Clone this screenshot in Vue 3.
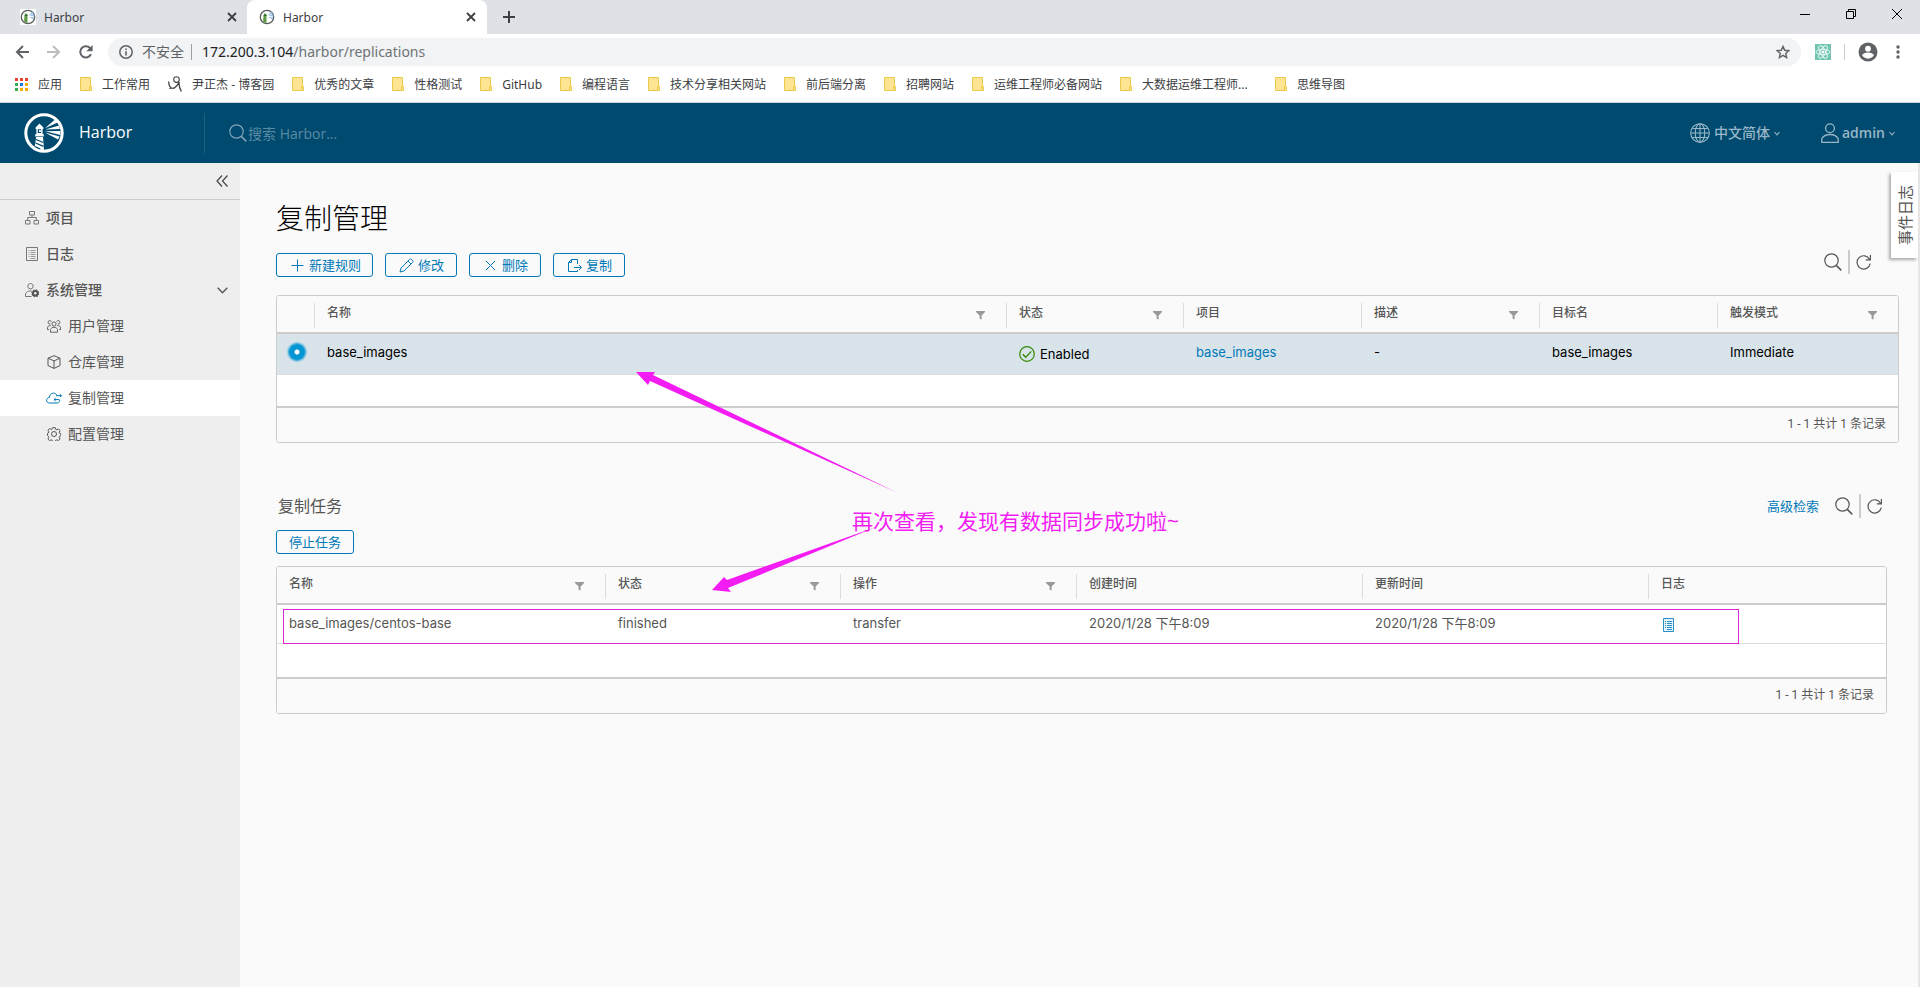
<script setup>
import { h, ref } from 'vue'

const icons = {
  logo: '<circle cx="20" cy="20" r="18.2" fill="none" stroke="#fff" stroke-width="3"/><path fill="#fff" d="M11.6 14.6 15.5 10.6 19.4 14.6V16H18.6V21H19.6V23H11.4V21H12.4V16H11.6z"/><path fill="#004a70" d="M13.8 16.2h3.4v3.8h-3.4z"/><path fill="#fff" d="M15 17.2h2.2v1.8H15z"/><path fill="#fff" d="M12.2 24h6.8l1 13.2-9.4-2.4z"/><path stroke="#004a70" stroke-width="1.3" d="m12 26.5 7.2 3M11.6 30l7.8 3.4M11.2 33.6l5 2.4"/><path fill="#fff" d="m21 15.2 10-8.6 2.6 3zM21.2 16.6l14-4.2.6 3.6zM21.2 18.2l15.2-.2v4zM21 19.6l14.6 3.8-1.6 3.2z"/><path fill="none" stroke="#fff" stroke-width=".8" d="M10.8 23h9.2"/>',
  favicon: '<circle cx="8" cy="8" r="6.700" fill="#fff" stroke="#5a5f5c" stroke-width="1.300"/><path fill="#5f9b45" d="m5.500 4 2 1.600v8.600l-3.400-1.600.4-6z"/><path fill="#2f6b36" d="M4.800 5.800h2.800v1.200H4.800z"/><path fill="#8fb5dd" d="m8.800 6.200 3.800-3.800 1.400 2zM9 7l5.600-1.800v2zM9 8l5.400.6-.6 2z"/>',
  close: '<path fill="none" stroke="#3c4043" stroke-width="1.8" d="m2 2 8 8m0-8-8 8"/>',
  plus: '<path fill="none" stroke="#3c4043" stroke-width="2" d="M6 0v12M0 6h12"/>',
  min: '<path stroke="#000" d="M0 5.5h10"/>',
  restore: '<path fill="none" stroke="#000" d="M.5 2.5h7v7h-7zM2.5 2.5v-2h7v7h-2"/>',
  winclose: '<path fill="none" stroke="#000" d="m0 0 10 10M10 0 0 10"/>',
  back: '<path fill="none" stroke="#5f6368" stroke-width="2" d="M14 7H2m6-6L2 7l6 6"/>',
  forward: '<path fill="none" stroke="#babcbe" stroke-width="2" d="M0 7h12M6 1l6 6-6 6"/>',
  reload: '<path fill="none" stroke="#5f6368" stroke-width="2" d="M12 9.2A5.6 5.6 0 1 1 11.4 3.6"/><path fill="#5f6368" d="M13.6 0v6.2H7.4z"/>',
  info: '<circle cx="7" cy="7" r="6.2" fill="none" stroke="#5f6368" stroke-width="1.5"/><path stroke="#5f6368" stroke-width="1.6" d="M7 6.2v4.2M7 3.4v1.7"/>',
  star: '<path fill="none" stroke="#5f6368" stroke-width="1.4" d="m7 1.4 1.7 3.9 4.1.4-3.1 2.8.9 4.1L7 10.4l-3.6 2.2.9-4.1L1.2 5.7l4.1-.4z"/>',
  react: '<path fill="#71c5b2" d="M0 0h16v16H0z"/><g fill="none" stroke="#e4f6f1" stroke-width="1"><ellipse cx="8" cy="8" rx="7" ry="2.7"/><ellipse cx="8" cy="8" rx="7" ry="2.7" transform="rotate(60 8 8)"/><ellipse cx="8" cy="8" rx="7" ry="2.7" transform="rotate(120 8 8)"/></g><circle cx="8" cy="8" r="1.5" fill="#fff"/>',
  avatar: '<circle cx="10" cy="10" r="9.5" fill="#5f6368"/><circle cx="10" cy="6.7" r="2.9" fill="#fff"/><path fill="#fff" d="M4.2 13.6c0-2.2 3.6-3.2 5.8-3.2s5.8 1 5.8 3.2a7 7 0 0 1-11.6 0z"/>',
  dots: '<g fill="#5f6368"><circle cx="2" cy="2" r="1.7"/><circle cx="2" cy="7" r="1.7"/><circle cx="2" cy="12" r="1.7"/></g>',
  apps: '<path fill="#ea4335" d="M0 0h3v3H0zM5 0h3v3H5zM10 0h3v3h-3z"/><path fill="#34a853" d="M0 5h3v3H0zM0 10h3v3H0z"/><path fill="#1a73e8" d="M5 5h3v3H5z"/><path fill="#f9ab00" d="M10 5h3v3h-3zM5 10h3v3H5zM10 10h3v3h-3z"/>',
  folder: '<path fill="#fee594" stroke="#ecc94b" d="M.5.5h10v9h1v4H.5z"/><path fill="none" stroke="#ecc94b" d="M9.5 13V9.5h1"/>',
  cnblogs: '<circle cx="8.500" cy="3.600" r="2.800" fill="none" stroke="#444" stroke-width="1.100"/><path fill="none" stroke="#444" stroke-width="1.300" d="M.6 5.500c.2 3 1.400 6.500 4 6.800 3 .2 5-3.600 6.600-6.300-.6 3.500.6 6.500 2.200 9.500"/><path stroke="#666" stroke-width=".9" d="M1 12.500h4"/>',
  search: '<circle cx="7.500" cy="7.500" r="6.700" fill="none" stroke="currentColor" stroke-width="1.200"/><path fill="none" stroke="currentColor" stroke-width="1.500" d="m12.300 12.400 5 5"/>',
  refresh: '<path fill="none" stroke="currentColor" stroke-width="1.200" d="M14.200 9.600A6.600 6.600 0 1 1 13.600 5.400M14.400 1v4.800H9.800"/>',
  globe: '<g fill="none" stroke="currentColor" stroke-width="1.100"><circle cx="10" cy="10" r="9.300"/><ellipse cx="10" cy="10" rx="4.800" ry="9.300"/><path d="M10 .7v18.600M.7 10h18.600M2.200 5.500h15.600M2.200 14.500h15.600"/></g>',
  user: '<g fill="none" stroke="currentColor" stroke-width="1.300"><circle cx="9" cy="5.300" r="4.400"/><path d="M.8 19.300v-3.500c1.300-2.700 4.400-4.300 8.200-4.300s6.900 1.600 8.200 4.300v3.500z"/></g>',
  caret: '<path fill="none" stroke="currentColor" stroke-width="1.100" d="m.5 1 2.500 2.800L5.500 1"/>',
  collapse: '<path fill="none" stroke="#444" stroke-width="1.200" d="M6 .5 1 6l5 5.500M11.500.5l-5 5.500 5 5.500"/>',
  angle: '<path fill="none" stroke="#565656" stroke-width="1.400" d="m.7.800 4.800 5 4.800-5"/>',
  org: '<g fill="none" stroke="#777"><path d="M4.500.500h5v3.500h-5zM.500 9.500h4.500V13H.500zM9 9.500h4.500V13H9zM7 4v2.500M2.700 9V6.500h8.600V9"/></g>',
  list: '<g fill="none" stroke="#777"><path d="M1.500.500h11v13h-11z"/><path stroke="#999" d="M3.500 3.500h1M5.500 3.500h5M3.500 5.500h1M5.500 5.500h5M3.500 7.500h1M5.500 7.500h5M3.500 9.500h1M5.500 9.500h5M5.500 11.500h5"/></g>',
  admin: '<g fill="none" stroke="#777"><circle cx="5.500" cy="3.200" r="2.700"/><path d="M6.500 13.500h-6v-2.700C1.500 8.800 3 7.900 5.500 7.900h1.200"/></g><circle cx="10.300" cy="10.300" r="2.300" fill="none" stroke="currentColor" stroke-width="2"/><circle cx="10.300" cy="10.300" r="3.400" fill="none" stroke="currentColor" stroke-width="1.200" stroke-dasharray="1.500 1.170"/>',
  users: '<g fill="none" stroke="currentColor" stroke-width=".9"><circle cx="7" cy="5" r="2.100"/><path d="M3.500 13.200v-2.700c.6-1.500 1.900-2.200 3.500-2.200s2.900.7 3.500 2.200v2.700zM4.400 2.800A1.700 1.700 0 1 0 3.300 4.900M9.600 2.800a1.700 1.700 0 1 1 1.100 2.100M2 10.500H.5V8.200C1 7.200 2 6.600 3.800 6.600M12 10.500h1.500V8.200c-.5-1-1.500-1.600-3.300-1.600"/></g>',
  box: '<path fill="none" stroke="currentColor" stroke-linejoin="round" d="M7 .700 13 3.200v7.400L7 13.400l-6-2.800V3.200zM1 3.200l6 2.700 6-2.700M7 5.900v7.500"/>',
  cloud: '<path fill="none" stroke="currentColor" stroke-width="1" d="M13.500 8.500c.6 1.500-.3 3.500-2.300 3.500H3.400C1.500 12 .6 10.800.6 9.300c0-1.600 1.200-2.700 2.800-2.700C3.500 4 5 2.100 7.400 2.100c1.500 0 2.600.6 3.300 1.700M10 4.700h5.500M13.900 3.200l1.600 1.500-1.600 1.500M13 8.600H8M9.600 7.100 8 8.600l1.600 1.500"/>',
  cog: '<g fill="none" stroke="currentColor"><circle cx="7" cy="7" r="2.500"/><path stroke-linejoin="round" d="M5.800.600h2.400l.4 1.700 1.300.5 1.500-.9 1.700 1.700-.9 1.500.5 1.300 1.200.3v2l-1.200.5-.5 1.300.9 1.500-1.700 1.700-1.500-.9-1.300.5-.4 1.200H5.800l-.4-1.200-1.300-.5-1.500.9-1.700-1.700.9-1.500-.5-1.300L.5 8.300v-2L1.300 6l.5-1.300-.9-1.500 1.700-1.700 1.500.9 1.300-.5z"/></g>',
  add: '<path stroke="currentColor" d="M7.500 1.500v12M1.500 7.500h12"/>',
  pencil: '<path fill="none" stroke="currentColor" stroke-linejoin="round" d="m1 14 1-4L10.600 1.400c.6-.6 1.200-.6 1.800 0l1.200 1.200c.6.6.6 1.200 0 1.800L5 13zM9 3l3 3"/>',
  times: '<path stroke="currentColor" d="m3 3 9 9M12 3l-9 9"/>',
  copy: '<path fill="none" stroke="currentColor" d="M10.500 12v1.500h-9V4.500l3-3h6v4.500M1.500 4.500h3v-3M7 9.500h7.300M12 7l2.400 2.500L12 12"/>',
  funnel: '<path fill="#999" d="M0 0h9v1L5.600 4.500v4l-2-.8V4.500L0 1z"/>',
  ok: '<circle cx="8" cy="8" r="7.300" fill="none" stroke="#318700" stroke-width="1.200"/><path fill="none" stroke="#318700" stroke-width="1.300" d="m3.800 8.200 3 3 5.500-5.800"/>',
  log: '<path fill="#e4f2fa" stroke="#2a8fc4" d="M.5.5h10v13H.5z"/><path stroke="#2a8fc4" d="M2 3.500h1M4 3.500h5M2 5.500h1M4 5.500h5M2 7.500h1M4 7.500h5M2 9.500h1M4 9.500h5M4 11.500h5"/>',
}
const Icon = (p) =>
  h('svg', { width: p.w, height: p.ht ?? p.w, viewBox: `0 0 ${p.w} ${p.ht ?? p.w}`, innerHTML: icons[p.name], 'aria-hidden': 'true' })
Icon.props = ['name', 'w', 'ht']

const bookmarks = ['工作常用', '尹正杰 - 博客园', '优秀的文章', '性格测试', 'GitHub', '编程语言', '技术分享相关网站', '前后端分离', '招聘网站', '运维工程师必备网站', '大数据运维工程师...', '思维导图']
const topNav = [
  { icon: 'org', label: '项目' },
  { icon: 'list', label: '日志' },
]
const subNav = [
  { icon: 'users', label: '用户管理' },
  { icon: 'box', label: '仓库管理' },
  { icon: 'cloud', label: '复制管理', active: true },
  { icon: 'cog', label: '配置管理' },
]
const actions = [
  { icon: 'add', label: '新建规则' },
  { icon: 'pencil', label: '修改' },
  { icon: 'times', label: '删除' },
  { icon: 'copy', label: '复制' },
]
const ruleCols = [
  { label: '名称', filter: true, cls: 'auto' },
  { label: '状态', filter: true, cls: 'w177' },
  { label: '项目', cls: 'w178' },
  { label: '描述', filter: true, cls: 'w178' },
  { label: '目标名', cls: 'w178' },
  { label: '触发模式', filter: true, cls: 'w181' },
]
const jobCols = [
  { label: '名称', filter: true, cls: 'auto' },
  { label: '状态', filter: true, cls: 'w235' },
  { label: '操作', filter: true, cls: 'w236' },
  { label: '创建时间', cls: 'w286' },
  { label: '更新时间', cls: 'w286' },
  { label: '日志', cls: 'w238' },
]
const query = ref('')
const url = ref('/harbor/replications')
</script>

<template>
  <div class="window">
    <div class="tabs">
      <div class="tab"><Icon name="favicon" :w="16" class="onwhite" /><span>Harbor</span><button aria-label="关闭标签页"><Icon name="close" :w="12" /></button></div>
      <div class="tab current"><Icon name="favicon" :w="16" /><span>Harbor</span><button aria-label="关闭标签页"><Icon name="close" :w="12" /></button></div>
      <button class="newtab" aria-label="新标签页"><Icon name="plus" :w="12" /></button>
      <div class="winctl">
        <button aria-label="最小化"><Icon name="min" :w="10" /></button>
        <button aria-label="还原"><Icon name="restore" :w="10" /></button>
        <button aria-label="关闭"><Icon name="winclose" :w="10" /></button>
      </div>
    </div>

    <div class="toolbar">
      <button aria-label="后退"><Icon name="back" :w="14" /></button>
      <button aria-label="前进"><Icon name="forward" :w="14" /></button>
      <button aria-label="重新加载"><Icon name="reload" :w="14" /></button>
      <div class="omnibox">
        <Icon name="info" :w="14" />
        <span class="unsafe">不安全</span>
        <span class="url"><b>172.200.3.104</b>{{ url }}</span>
        <button aria-label="收藏"><Icon name="star" :w="14" /></button>
      </div>
      <button aria-label="React"><Icon name="react" :w="16" /></button>
      <span class="tsep"></span>
      <button aria-label="用户"><Icon name="avatar" :w="20" /></button>
      <button class="menu" aria-label="菜单"><Icon name="dots" :w="4" :ht="14" /></button>
    </div>

    <nav class="bookmarks">
      <a href="#"><Icon name="apps" :w="13" />应用</a>
      <a v-for="b in bookmarks" :key="b" href="#" :class="{ long: b.startsWith('大数据') }">
        <Icon v-if="b.startsWith('尹')" name="cnblogs" :w="14" :ht="16" />
        <Icon v-else name="folder" :w="12" :ht="14" />{{ b }}
      </a>
    </nav>

    <header class="header">
      <a class="brand" href="#"><Icon name="logo" :w="40" /><span>Harbor</span></a>
      <label class="search"><Icon name="search" :w="18" /><input v-model="query" type="text" placeholder="搜索 Harbor..." aria-label="搜索" /></label>
      <button class="lang"><Icon name="globe" :w="20" /><span>中文简体</span><Icon name="caret" :w="6" :ht="5" /></button>
      <button class="account"><Icon name="user" :w="18" :ht="20" /><span>admin</span><Icon name="caret" :w="6" :ht="5" /></button>
    </header>

    <div class="body">
      <aside class="sidebar">
        <div class="fold"><button aria-label="收起"><Icon name="collapse" :w="12" /></button></div>
        <a v-for="n in topNav" :key="n.label" class="item strong" href="#"><Icon :name="n.icon" :w="14" /><span class="label">{{ n.label }}</span></a>
        <button class="item strong group"><Icon name="admin" :w="14" /><span class="label">系统管理</span><Icon name="angle" :w="11" :ht="7" class="angle" /></button>
        <a v-for="n in subNav" :key="n.label" class="item sub" :class="{ active: n.active }" href="#"><Icon :name="n.icon" :w="n.active ? 16 : 14" :ht="14" /><span class="label">{{ n.label }}</span></a>
      </aside>

      <main class="main">
        <h1>复制管理</h1>
        <div class="bar">
          <button v-for="a in actions" :key="a.label" class="btn"><Icon :name="a.icon" :w="15" /><span class="label">{{ a.label }}</span></button>
          <div class="tools">
            <button aria-label="搜索"><Icon name="search" :w="18" /></button>
            <i></i>
            <button aria-label="刷新"><Icon name="refresh" :w="16" /></button>
          </div>
        </div>

        <div class="grid rules">
          <table>
            <thead>
              <tr>
                <th class="pick" aria-label="选择"></th>
                <th v-for="c in ruleCols" :key="c.label" :class="c.cls">
                  <div class="cell sep">{{ c.label }}<button v-if="c.filter" aria-label="筛选"><Icon name="funnel" :w="9" /></button></div>
                </th>
              </tr>
            </thead>
            <tbody>
              <tr class="selected">
                <td class="pick"><input type="radio" name="rule" checked aria-label="base_images" /></td>
                <td>base_images</td>
                <td><span class="state"><Icon name="ok" :w="16" />Enabled</span></td>
                <td><a href="#">base_images</a></td>
                <td>-</td>
                <td>base_images</td>
                <td>Immediate</td>
              </tr>
            </tbody>
          </table>
          <div class="foot">1 - 1 共计 1 条记录</div>
        </div>

        <div class="jobs">
          <div class="jobhead">
            <h2>复制任务</h2>
            <div class="tools">
              <a class="label" href="#">高级检索</a>
              <button aria-label="搜索"><Icon name="search" :w="18" /></button>
              <i></i>
              <button aria-label="刷新"><Icon name="refresh" :w="16" /></button>
            </div>
          </div>
          <button class="btn"><span class="label">停止任务</span></button>
          <div class="grid tasks">
            <table>
              <thead>
                <tr>
                  <th v-for="(c, i) in jobCols" :key="c.label" :class="c.cls">
                    <div class="cell" :class="{ sep: i > 0 }">{{ c.label }}<button v-if="c.filter" aria-label="筛选"><Icon name="funnel" :w="9" /></button></div>
                  </th>
                </tr>
              </thead>
              <tbody>
                <tr>
                  <td>base_images/centos-base</td>
                  <td>finished</td>
                  <td>transfer</td>
                  <td>2020/1/28 下午8:09</td>
                  <td>2020/1/28 下午8:09</td>
                  <td><a class="log" href="#" aria-label="日志"><Icon name="log" :w="11" :ht="14" /></a></td>
                </tr>
              </tbody>
            </table>
            <div class="foot">1 - 1 共计 1 条记录</div>
          </div>
        </div>
      </main>
      <button class="events">事件日志</button>
    </div>

    <svg class="arrows" width="264" height="222" viewBox="636 370 264 222" aria-hidden="true">
      <path fill="#f31df3" d="M636 372h19l-2 3 245 118-248-112-2 4z" />
      <path fill="#f31df3" d="m712 590 12-13 3 3 149-53-148 61 3 4z" />
    </svg>
    <div class="mark"></div>
    <p class="note">再次查看，发现有数据同步成功啦~</p>
  </div>
</template>

<style>
body { background: #fafafa; }
</style>

<style scoped>
.window { position: relative; display: flex; flex-direction: column; min-height: 100vh; font-family: "Open Sans", "Noto Sans CJK SC", sans-serif; font-size: 13px; color: #565656; overflow: hidden; }
.window * { box-sizing: border-box; }
button { border: 0; background: none; padding: 0; font: inherit; color: inherit; display: flex; align-items: center; cursor: pointer; }
a { color: inherit; text-decoration: none; }
svg { flex: none; display: block; }
.label { padding-bottom: 2px; }

.tabs { display: flex; height: 34px; background: #dee1e6; color: #3c4043; }
.tab { display: flex; align-items: center; width: 240px; padding: 0 10px 0 12px; gap: 8px; font-family: "Noto Sans", sans-serif; font-size: 12px; }
.tab:first-child { width: 247px; padding: 0 9px 0 20px; }
.tab span { flex: 1; }
.tab.current { background: #fff; border-radius: 8px 8px 0 0; }
.onwhite { background: #fff; }
.newtab { margin-left: 16px; }
.winctl { margin-left: auto; display: flex; align-items: center; gap: 36px; padding: 0 18px 6px 0; }

.toolbar { display: flex; align-items: center; height: 36px; background: #fff; padding: 0 20px 0 15px; gap: 18px; }
.omnibox { flex: 1; display: flex; align-items: center; height: 28px; border-radius: 14px; background: #f1f3f4; padding: 0 11px; font-family: "Noto Sans", "Noto Sans CJK SC", sans-serif; font-size: 14px; color: #5f6368; margin: 0 -4px 0 -3px; }
.unsafe { padding: 0 7px 0 9px; border-right: 1px solid #9aa0a6; line-height: 16px; }
.url { flex: 1; padding: 0 0 2px 10px; color: #6f7377; }
.url b { font-weight: 400; color: #202124; }
.tsep { width: 1px; height: 16px; background: #ccc; margin: 0 -5px; }
.menu { margin: 0; }

.bookmarks { display: flex; align-items: center; gap: 18px; height: 33px; padding: 0 15px 4px; background: #fff; border-bottom: 1px solid #d2d4d6; font-family: "Noto Sans", "Noto Sans CJK SC", sans-serif; font-size: 12px; color: #3c4043; white-space: nowrap; overflow: hidden; }
.bookmarks a { display: flex; align-items: center; gap: 10px; }
.bookmarks a.long { width: 137px; }

.header { display: flex; align-items: center; height: 60px; background: #004a70; color: #99b7c6; font-size: 14px; padding-right: 25px; }
.brand { display: flex; align-items: center; width: 205px; height: 40px; padding-left: 24px; gap: 15px; color: #fff; font-size: 16px; border-right: 1px solid #1f5f81; }
.brand span { padding-bottom: 2px; }
.search { flex: 1; display: flex; align-items: center; padding-left: 24px; gap: 1px; color: #80a4b7; }
.search input { border: 0; background: none; outline: 0; font: inherit; color: #fff; padding: 0; width: 240px; }
.search input::placeholder { color: #5a8aa3; opacity: 1; }
.lang span { margin: 0 4px 2px; font-weight: 500; }
.account { margin-left: 41px; }
.account span { margin: 0 4px 2px 3px; font-weight: 600; }

.body { flex: 1; display: flex; position: relative; background: #fafafa; }
.sidebar { width: 240px; flex: none; background: #eee; }
.fold { height: 37px; display: flex; align-items: center; justify-content: flex-end; padding-right: 12px; border-bottom: 1px solid #ccc; }
.item { display: flex; align-items: center; width: 100%; height: 36px; padding-left: 25px; gap: 7px; font-size: 14px; color: #565656; }
.strong { font-weight: 500; }
.angle { margin: 0 12px 0 auto; }
.sub { padding-left: 47px; }
.sub.active { background: #fff; padding-left: 46px; gap: 6px; }
.active svg { color: #0079b8; }

.main { flex: 1; min-width: 0; padding: 36px 19px 36px 36px; border-right: 2px solid #e6e6e6; }
h1 { margin: 0; font-size: 28px; line-height: 38px; font-weight: 300; color: #000; }
.bar { display: flex; align-items: flex-end; gap: 12px; margin-top: 13px; }
.btn { height: 24px; padding: 0 12px; border: 1px solid #0079b8; border-radius: 3px; color: #0079b8; font-size: 13px; gap: 4px; }
.bar .btn { padding: 0 11px 0 13px; min-width: 72px; }
.tools { margin-left: auto; display: flex; align-items: center; gap: 6px; color: #565656; }
.tools i { width: 2px; height: 24px; background: #ccc; }
.tools a { color: #0079b8; margin-right: 10px; }
.bar .tools { padding: 0 27px 3px 0; }

.grid { border: 1px solid #ccc; border-radius: 3px; background: #fff; overflow: hidden; }
.rules { margin-top: 18px; }
table { width: 100%; border-collapse: separate; border-spacing: 0; table-layout: fixed; }
th { padding: 7px 0 4px; height: 38px; border-bottom: 2px solid #ccc; background: #fafafa; text-align: left; font-size: 12px; font-weight: 500; }
.cell { display: flex; height: 25px; line-height: 20px; padding: 0 21px 0 12px; justify-content: space-between; align-items: flex-start; }
.cell button { height: 25px; }
.sep { border-left: 1px solid #ddd; }
td { padding: 8px 13px 0; line-height: 20px; vertical-align: top; border-bottom: 1px solid #ddd; font-family: Inter, "Noto Sans CJK SC", sans-serif; }
td:first-child { padding-left: 12px; }
.pick { width: 37px; }
.w177 { width: 177px; }
.w178 { width: 178px; }
.w181 { width: 181px; }
.w235 { width: 235px; }
.w236 { width: 236px; }
.w286 { width: 286px; }
.w238 { width: 238px; }
.rules td { height: 41px; }
.tasks td { height: 39px; }
.selected td { background: #d9e4ea; color: #000; }
.selected a { color: #0079b8; }
td.pick { padding: 10px 0 0 12px; }
.selected input { appearance: none; display: block; margin: 0; width: 16px; height: 16px; border-radius: 50%; background: radial-gradient(circle, #fff 0 2px, #0095d3 3px); box-shadow: 0 0 2px 1px #0095d3; }
.state { display: flex; align-items: center; gap: 5px; padding-top: 2px; }
.foot { height: 36px; margin-top: 31px; border-top: 2px solid #ccc; background: #fafafa; text-align: right; padding-right: 12px; font-family: Roboto, "Noto Sans CJK SC", sans-serif; font-size: 12px; line-height: 32px; }
.tasks .foot { margin-top: 33px; }

.jobs { margin-top: 51px; padding-right: 12px; }
.jobhead { display: flex; align-items: center; height: 24px; padding: 0 4px 0 2px; }
h2 { margin: 0; padding-bottom: 2px; font-size: 16px; font-weight: 400; }
.jobs > .btn { margin: 12px 0; }
.log { display: block; width: 12px; padding: 5px 0 0 2px; }

.events { position: absolute; top: 9px; right: 2px; width: 27px; height: 86px; justify-content: center; writing-mode: vertical-rl; text-orientation: sideways; transform: rotate(180deg); background: #fff; font-size: 15px; box-shadow: 2px -2px 3px #aaa; }
.arrows { position: absolute; left: 636px; top: 370px; pointer-events: none; }
.mark { position: absolute; left: 283px; top: 609px; right: 181px; height: 35px; border: 1px solid #d926d9; pointer-events: none; }
.note { position: absolute; left: 852px; top: 506px; margin: 0; font-size: 21px; line-height: 30px; color: #f31df3; white-space: nowrap; }
</style>
